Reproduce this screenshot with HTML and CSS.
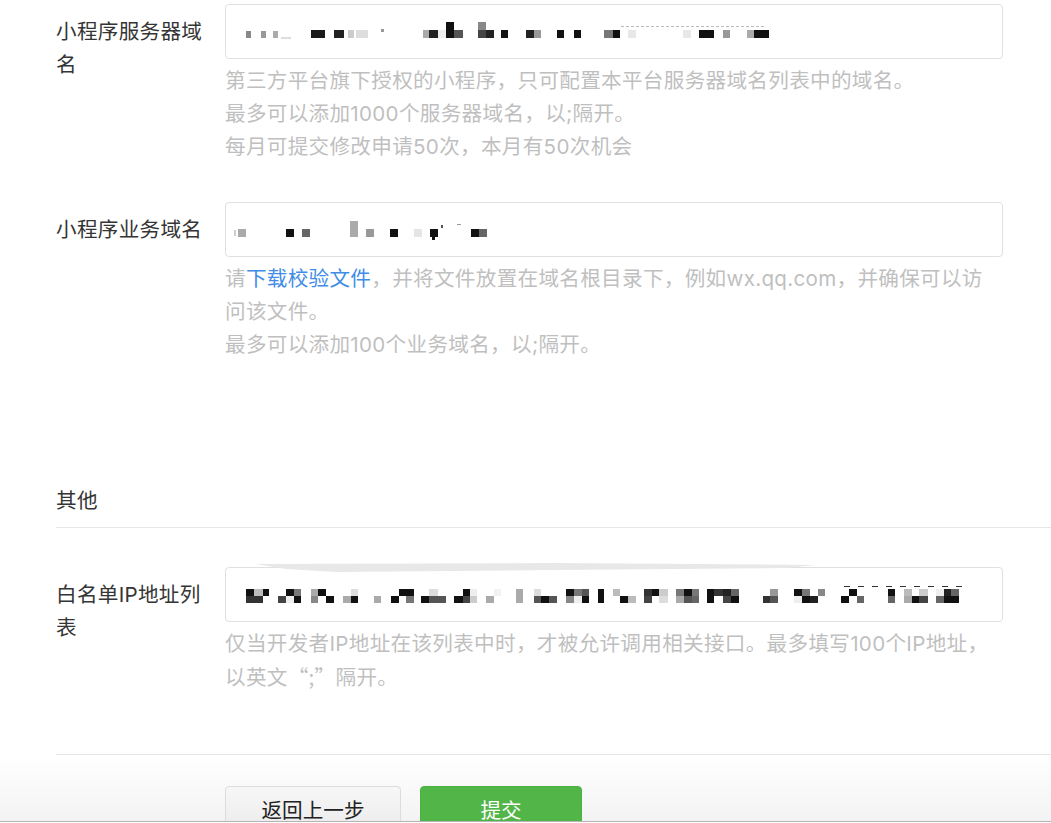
FILE: index.html
```html
<!DOCTYPE html>
<html lang="zh-CN">
<head>
  <meta charset="UTF-8">
  <title>开发设置</title>
  <link rel="stylesheet" href="styles.css">
</head>
<body>
  <div class="page">
    <div class="form">
      <div class="row">
        <div class="label">小程序服务器域名</div>
        <div class="field">
          <div class="input">
            <!-- 打码后的域名 -->
            <svg class="mosaic" width="740" height="20" viewBox="0 0 740 20">
              <rect x="12" y="9" width="5" height="7" fill="#888"/>
              <rect x="27" y="9" width="5" height="7" fill="#999"/>
              <rect x="39" y="9" width="5" height="7" fill="#aaa"/>
              <rect x="47" y="15" width="10" height="2" fill="#ddd"/>
              <rect x="77" y="8" width="14" height="8" fill="#1a1a1a"/>
              <rect x="100" y="8" width="10" height="8" fill="#222"/>
              <rect x="114" y="8" width="6" height="8" fill="#ccc"/>
              <rect x="122" y="8" width="12" height="8" fill="#ddd"/>
              <rect x="147" y="7" width="3" height="3" fill="#999"/>
              <rect x="189" y="8" width="6" height="8" fill="#aaa"/>
              <rect x="195" y="8" width="9" height="8" fill="#222"/>
              <rect x="204" y="8" width="8" height="8" fill="#eee"/>
              <rect x="212" y="0" width="8" height="16" fill="#111"/>
              <rect x="220" y="8" width="9" height="8" fill="#555"/>
              <rect x="244" y="0" width="8" height="8" fill="#888"/>
              <rect x="244" y="8" width="8" height="8" fill="#444"/>
              <rect x="252" y="8" width="8" height="8" fill="#222"/>
              <rect x="267" y="8" width="7" height="8" fill="#111"/>
              <rect x="292" y="8" width="8" height="8" fill="#222"/>
              <rect x="300" y="8" width="7" height="8" fill="#999"/>
              <rect x="323" y="8" width="7" height="8" fill="#111"/>
              <rect x="340" y="8" width="7" height="8" fill="#111"/>
              <rect x="370" y="8" width="9" height="8" fill="#777"/>
              <rect x="379" y="8" width="7" height="8" fill="#111"/>
              <rect x="394" y="8" width="8" height="8" fill="#e8e8e8"/>
              <line x1="387" y1="4.5" x2="530" y2="4.5" stroke="#bbb" stroke-dasharray="3 2"/>
              <rect x="449" y="8" width="8" height="8" fill="#e8e8e8"/>
              <rect x="465" y="8" width="15" height="8" fill="#111"/>
              <rect x="489" y="8" width="7" height="8" fill="#999"/>
              <rect x="513" y="8" width="7" height="8" fill="#aaa"/>
              <rect x="520" y="8" width="15" height="8" fill="#111"/>
            </svg>
          </div>
          <div class="help">
            第三方平台旗下授权的小程序，只可配置本平台服务器域名列表中的域名。<br>
            最多可以添加1000个服务器域名，以;隔开。<br>
            每月可提交修改申请50次，本月有50次机会
          </div>
        </div>
      </div>

      <div class="row">
        <div class="label">小程序业务域名</div>
        <div class="field">
          <div class="input">
            <svg class="mosaic" width="740" height="20" viewBox="0 0 740 20">
              <rect x="0" y="10" width="2" height="6" fill="#ccc"/>
              <rect x="4" y="9" width="8" height="8" fill="#aaa"/>
              <rect x="52" y="9" width="8" height="8" fill="#111"/>
              <rect x="68" y="9" width="8" height="8" fill="#666"/>
              <rect x="116" y="1" width="8" height="16" fill="#aaa"/>
              <rect x="132" y="9" width="8" height="8" fill="#999"/>
              <rect x="156" y="9" width="8" height="8" fill="#111"/>
              <rect x="180" y="9" width="8" height="8" fill="#e5e5e5"/>
              <rect x="196" y="9" width="8" height="8" fill="#111"/>
              <rect x="198" y="17" width="3" height="3" fill="#111"/>
              <rect x="207" y="5" width="2" height="3" fill="#555"/>
              <rect x="223" y="4" width="4" height="1" fill="#999"/>
              <rect x="237" y="9" width="8" height="8" fill="#111"/>
              <rect x="245" y="9" width="8" height="8" fill="#666"/>
            </svg>
          </div>
          <div class="help">
            请<a href="#" class="link">下载校验文件</a>，并将文件放置在域名根目录下，例如wx.qq.com，并确保可以访问该文件。<br>
            最多可以添加100个业务域名，以;隔开。
          </div>
        </div>
      </div>

      <div class="section-title">其他</div>

      <div class="row">
        <div class="label">白名单IP地址列表</div>
        <div class="field">
          <div class="input input-marked">
            <svg class="mosaic" width="740" height="20" viewBox="0 0 740 20">
              <g class="top">
                <rect x="12" y="4" width="8" height="7" fill="#111"/>
                <rect x="20" y="4" width="9" height="7" fill="#bbb"/>
                <rect x="29" y="4" width="6" height="7" fill="#111"/>
                <rect x="52" y="4" width="8" height="7" fill="#111"/>
                <rect x="60" y="4" width="7" height="7" fill="#777"/>
                <rect x="77" y="4" width="7" height="7" fill="#aaa"/>
                <rect x="84" y="4" width="8" height="7" fill="#111"/>
                <rect x="117" y="4" width="7" height="7" fill="#ddd"/>
                <rect x="165" y="4" width="15" height="7" fill="#111"/>
                <rect x="195" y="4" width="9" height="7" fill="#ddd"/>
                <rect x="229" y="4" width="7" height="7" fill="#111"/>
                <rect x="236" y="4" width="7" height="7" fill="#eee"/>
                <rect x="260" y="4" width="7" height="7" fill="#f2f2f2"/>
                <rect x="282" y="4" width="7" height="7" fill="#aaa"/>
                <rect x="300" y="4" width="7" height="7" fill="#ddd"/>
                <rect x="332" y="4" width="8" height="7" fill="#111"/>
                <rect x="340" y="4" width="8" height="7" fill="#777"/>
                <rect x="348" y="4" width="7" height="7" fill="#555"/>
                <rect x="364" y="4" width="6" height="7" fill="#111"/>
                <rect x="379" y="4" width="7" height="7" fill="#bbb"/>
                <rect x="410" y="4" width="8" height="7" fill="#333"/>
                <rect x="418" y="4" width="7" height="7" fill="#111"/>
                <rect x="425" y="4" width="9" height="7" fill="#ccc"/>
                <rect x="442" y="4" width="8" height="7" fill="#777"/>
                <rect x="450" y="4" width="8" height="7" fill="#111"/>
                <rect x="458" y="4" width="7" height="7" fill="#777"/>
                <rect x="473" y="4" width="7" height="7" fill="#111"/>
                <rect x="480" y="4" width="9" height="7" fill="#333"/>
                <rect x="489" y="4" width="8" height="7" fill="#222"/>
                <rect x="497" y="4" width="8" height="7" fill="#666"/>
                <rect x="536" y="4" width="8" height="7" fill="#999"/>
                <rect x="560" y="4" width="8" height="7" fill="#111"/>
                <rect x="568" y="4" width="8" height="7" fill="#777"/>
                <rect x="584" y="4" width="7" height="7" fill="#888"/>
                <rect x="615" y="4" width="8" height="7" fill="#111"/>
                <rect x="654" y="4" width="7" height="7" fill="#111"/>
                <rect x="670" y="4" width="8" height="7" fill="#bbb"/>
                <rect x="685" y="4" width="9" height="7" fill="#ccc"/>
                <rect x="702" y="4" width="8" height="7" fill="#eee"/>
                <rect x="710" y="4" width="7" height="7" fill="#222"/>
                <rect x="717" y="4" width="8" height="7" fill="#666"/>
              </g>
              <g class="bottom">
                <rect x="12" y="11" width="17" height="7" fill="#333"/>
                <rect x="44" y="11" width="8" height="7" fill="#444"/>
                <rect x="52" y="11" width="8" height="7" fill="#eee"/>
                <rect x="60" y="11" width="7" height="7" fill="#111"/>
                <rect x="77" y="11" width="7" height="7" fill="#888"/>
                <rect x="92" y="11" width="8" height="7" fill="#111"/>
                <rect x="109" y="11" width="8" height="7" fill="#aaa"/>
                <rect x="117" y="11" width="7" height="7" fill="#111"/>
                <rect x="140" y="11" width="7" height="7" fill="#aaa"/>
                <rect x="157" y="11" width="8" height="7" fill="#111"/>
                <rect x="172" y="11" width="8" height="7" fill="#777"/>
                <rect x="187" y="11" width="8" height="7" fill="#111"/>
                <rect x="195" y="11" width="9" height="7" fill="#555"/>
                <rect x="204" y="11" width="8" height="7" fill="#555"/>
                <rect x="220" y="11" width="9" height="7" fill="#111"/>
                <rect x="229" y="11" width="7" height="7" fill="#444"/>
                <rect x="236" y="11" width="7" height="7" fill="#ccc"/>
                <rect x="252" y="11" width="8" height="7" fill="#aaa"/>
                <rect x="282" y="11" width="7" height="7" fill="#aaa"/>
                <rect x="300" y="11" width="7" height="7" fill="#555"/>
                <rect x="307" y="11" width="8" height="7" fill="#111"/>
                <rect x="315" y="11" width="8" height="7" fill="#555"/>
                <rect x="332" y="11" width="8" height="7" fill="#888"/>
                <rect x="340" y="11" width="8" height="7" fill="#eee"/>
                <rect x="348" y="11" width="7" height="7" fill="#111"/>
                <rect x="364" y="11" width="6" height="7" fill="#111"/>
                <rect x="386" y="11" width="8" height="7" fill="#111"/>
                <rect x="394" y="11" width="8" height="7" fill="#bbb"/>
                <rect x="410" y="11" width="8" height="7" fill="#444"/>
                <rect x="425" y="11" width="9" height="7" fill="#ddd"/>
                <rect x="442" y="11" width="8" height="7" fill="#aaa"/>
                <rect x="450" y="11" width="8" height="7" fill="#555"/>
                <rect x="458" y="11" width="7" height="7" fill="#666"/>
                <rect x="473" y="11" width="7" height="7" fill="#111"/>
                <rect x="489" y="11" width="8" height="7" fill="#444"/>
                <rect x="497" y="11" width="8" height="7" fill="#111"/>
                <rect x="529" y="11" width="7" height="7" fill="#333"/>
                <rect x="536" y="11" width="8" height="7" fill="#555"/>
                <rect x="560" y="11" width="8" height="7" fill="#eee"/>
                <rect x="568" y="11" width="8" height="7" fill="#111"/>
                <rect x="576" y="11" width="8" height="7" fill="#222"/>
                <rect x="607" y="11" width="8" height="7" fill="#111"/>
                <rect x="623" y="11" width="7" height="7" fill="#666"/>
                <rect x="654" y="11" width="7" height="7" fill="#666"/>
                <rect x="670" y="11" width="8" height="7" fill="#aaa"/>
                <rect x="678" y="11" width="7" height="7" fill="#111"/>
                <rect x="685" y="11" width="9" height="7" fill="#444"/>
                <rect x="702" y="11" width="8" height="7" fill="#666"/>
                <rect x="710" y="11" width="7" height="7" fill="#111"/>
                <rect x="717" y="11" width="8" height="7" fill="#111"/>
              </g>
              <line x1="610" y1="1.5" x2="732" y2="1.5" stroke="#333" stroke-dasharray="6 8"/>
            </svg>
            <!-- 截图上残留的涂抹痕迹 -->
            <svg class="smudge" width="600" height="12" viewBox="0 0 600 12">
              <path d="M30 2 L330 1 L590 3 L560 6 L330 8 L110 10 L60 7 Z" fill="#e8e8e8"/>
            </svg>
          </div>
          <div class="help">
            仅当开发者IP地址在该列表中时，才被允许调用相关接口。最多填写100个IP地址，以英文<span class="quote">“;”</span>隔开。
          </div>
        </div>
      </div>
      <div class="form-end"></div>
    </div>

    <div class="actions">
      <button class="btn btn-default">返回上一步</button>
      <button class="btn btn-primary">提交</button>
    </div>
  </div>
</body>
</html>
```

FILE: styles.css
```css
html, body {
  margin: 0;
  padding: 0;
  background: #fff;
}
body {
  font-family: "Inter", "Noto Sans CJK SC", sans-serif;
  font-size: 20.6px;
  letter-spacing: 0.3px;
  color: #353535;
}
.page {
  height: 822px;
  overflow: hidden;
  border-bottom: 1px solid #b4b4b4;
  box-sizing: border-box;
  display: flex;
  flex-direction: column;
}
.form {
  padding: 4px 0 0 56px;
}
.row {
  display: flex;
  margin-bottom: 39px;
}
.label {
  width: 149px;
  padding: 11px 20px 0 0;
  line-height: 33px;
}
.field {
  width: 778px;
}
.input {
  height: 55px;
  box-sizing: border-box;
  border: 1px solid #e0e0e0;
  border-radius: 4px;
  padding-left: 8px;
  display: flex;
  align-items: center;
}
.input-marked {
  position: relative;
}
.mosaic {
  display: block;
}
.smudge {
  position: absolute;
  left: 0;
  top: -6px;
}
.help {
  margin-top: 5px;
  max-width: 776px;
  line-height: 33px;
  color: #bfbfbf;
}
.quote {
  font-family: "Noto Sans CJK SC", sans-serif;
}
.link {
  color: #3f8de6;
  text-decoration: none;
}
.section-title {
  margin-top: 123px;
  line-height: 33px;
  padding-bottom: 10px;
  border-bottom: 1px solid #e5e5ea;
  margin-bottom: 39px;
}
.form-end {
  margin-top: 60px;
  border-bottom: 1px solid #e4e4e4;
}
.actions {
  flex: 1;
  padding: 31px 0 0 225px;
  background: linear-gradient(#fff, #f1f1f1);
  display: flex;
  gap: 19px;
  align-items: flex-start;
}
.btn {
  height: 46px;
  border-radius: 4px;
  font-family: "Inter", "Noto Sans CJK SC", sans-serif;
  font-size: 20.6px;
  padding: 0;
}
.btn-default {
  width: 176px;
  border: 1px solid #dcdcdc;
  background: linear-gradient(#f7f7f7, #ebebeb);
  color: #222;
}
.btn-primary {
  width: 162px;
  border: 1px solid #4cb043;
  background: #52b548;
  color: #fff;
}
```
